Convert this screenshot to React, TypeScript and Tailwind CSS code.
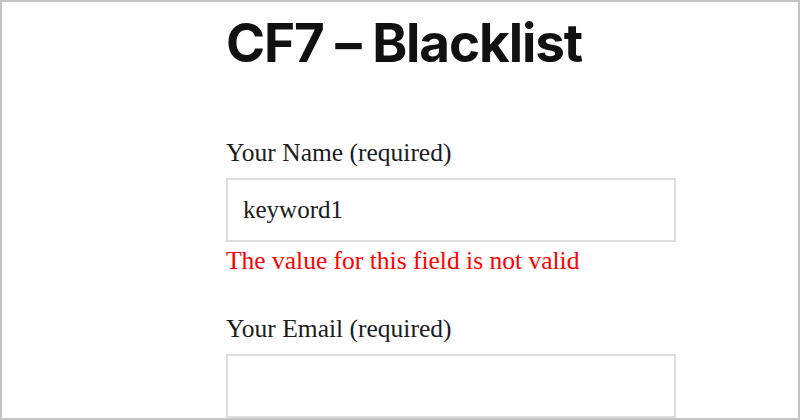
import { useState } from "react";

// ── Contact form field ─────────────────────────────────────────────────────────

interface FieldProps {
  label: string;
  value?: string;
  error?: string;
  className?: string;
}

function Field({ label, value = "", error, className = "" }: FieldProps) {
  const [text, setText] = useState(value);
  return (
    <div className={`flex flex-col ${className}`}>
      <label className="text-[25.5px] leading-[30px] text-[#1c1c1c]">{label}</label>
      <input
        value={text}
        onChange={(e) => setText(e.target.value)}
        className="mt-[10px] h-16 w-[450px] border-2 border-[#dddddd] bg-white px-[15px] text-[25px] text-[#1c1c1c] outline-none"
      />
      {error && (
        <p className="mt-1 text-[25.5px] leading-[30px] text-[#ff0000]">{error}</p>
      )}
    </div>
  );
}

// ── Page ───────────────────────────────────────────────────────────────────────

export default function App() {
  return (
    <div className="h-[420px] w-[800px] overflow-hidden border-2 border-[#c4c4c4] bg-white">
      <div
        className="flex flex-col pl-[224px]"
        style={{ fontFamily: '"Liberation Serif", "Times New Roman", serif' }}
      >
        <h1
          className="mt-[14px] text-[53px] font-bold leading-[54px] tracking-[-1.1px] text-[#111111]"
          style={{ fontFamily: "Inter, Roboto, sans-serif" }}
        >
          CF7 – Blacklist
        </h1>

        <Field
          className="mt-[68px]"
          label="Your Name (required)"
          value="keyword1"
          error="The value for this field is not valid"
        />

        <Field className="mt-[38px]" label="Your Email (required)" />
      </div>
    </div>
  );
}
